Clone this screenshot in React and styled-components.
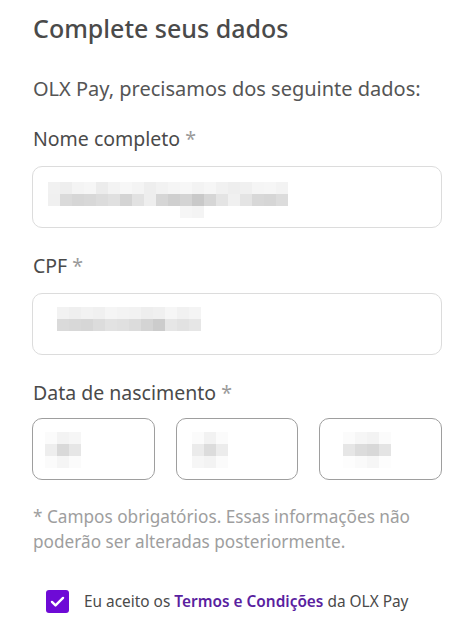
import styled, { createGlobalStyle } from "styled-components";

const GlobalStyle = createGlobalStyle`
  * { box-sizing: border-box; }
  body {
    margin: 0;
    background: #ffffff;
    font-family: "Noto Sans", "Open Sans", sans-serif;
    color: #4a4a4a;
  }
`;

// pixelated placeholders standing in for the blurred personal data
const NAME_ROWS = [
  "f1 ee f4 f6 ec f3 f7 f4 ee f2 f5 f7 f3 f6 f1 ee f0 f5 f6 f3",
  "f0 da d6 d8 dc e0 d4 e2 ee d6 cf d4 c9 d6 e4 f0 e4 d8 d6 dc",
  "ff ff ff ff ff ff ff ff ff ff ff f6 f4 ff ff ff ff ff ff ff",
];
const CPF_ROWS = [
  "f2 ef f2 f0 f5 f3 f2 ee f0 f6 f1 f4",
  "da d8 d6 dc e2 e0 dc d4 cc e6 e2 e6",
];
const DAY_ROWS = ["fb f3 f6", "ee d9 e6", "fb f5 fb"];
const MONTH_ROWS = ["fb f2 fb", "eb dc ec", "f6 f3 fb"];
const YEAR_ROWS = ["fb f6 f3 fb", "e6 dc d8 e4", "fd fa f6 fd"];

const Redacted = ({ rows }) => (
  <Mosaic>
    {rows.map((row, i) => (
      <MosaicRow key={i}>
        {row.split(" ").map((shade, j) => (
          <Cell key={j} style={{ background: `#${shade}${shade}${shade}` }} />
        ))}
      </MosaicRow>
    ))}
  </Mosaic>
);

const App = () => (
  <>
    <GlobalStyle />
    <Page>
      <Title>Complete seus dados</Title>
      <Intro>OLX Pay, precisamos dos seguinte dados:</Intro>

      <Field $first>
        <Label>
          Nome completo <Req>*</Req>
        </Label>
        <InputBox $inset={14.5} $top={15}>
          <Redacted rows={NAME_ROWS} />
        </InputBox>
      </Field>

      <Field>
        <Label>
          CPF <Req>*</Req>
        </Label>
        <InputBox $inset={23.5}>
          <Redacted rows={CPF_ROWS} />
        </InputBox>
      </Field>

      <Field>
        <Label>
          Data de nascimento <Req>*</Req>
        </Label>
        <DateRow>
          <DateBox $inset={11.5}>
            <Redacted rows={DAY_ROWS} />
          </DateBox>
          <DateBox $inset={15.5}>
            <Redacted rows={MONTH_ROWS} />
          </DateBox>
          <DateBox $inset={22.5}>
            <Redacted rows={YEAR_ROWS} />
          </DateBox>
        </DateRow>
      </Field>

      <Note>
        * Campos obrigatórios. Essas informações não poderão ser alteradas
        posteriormente.
      </Note>

      <Terms>
        <Check>
          <svg viewBox="0 0 24 24" width="19" height="19">
            <path
              d="M5 12.5l4.5 4.5L19 7.5"
              fill="none"
              stroke="#ffffff"
              strokeWidth="3"
              strokeLinecap="round"
              strokeLinejoin="round"
            />
          </svg>
        </Check>
        <TermsText>
          Eu aceito os <TermsLink>Termos e Condições</TermsLink> da OLX Pay
        </TermsText>
      </Terms>
    </Page>
  </>
);

const Page = styled.div`
  display: flex;
  flex-direction: column;
  padding: 12px 32px 0 32px;
  width: 474px;
  min-height: 632px;
`;

const Title = styled.h1`
  margin: 0 0 0 1px;
  font-size: 25px;
  font-weight: 500;
  line-height: 32px;
  color: #4a4a4a;
`;

const Intro = styled.p`
  margin: 32px 0 0 1px;
  font-size: 20px;
  line-height: 26px;
  color: #555555;
`;

const Field = styled.div`
  display: flex;
  flex-direction: column;
  margin-top: ${(p) => (p.$first ? 24 : 25.5)}px;
`;

const Label = styled.div`
  margin-left: 1px;
  font-size: 19.5px;
  line-height: 26px;
  color: #4a4a4a;
`;

const Req = styled.span`
  color: #9a9a9a;
`;

const InputBox = styled.div`
  display: flex;
  align-items: flex-start;
  height: 62px;
  margin-top: 13.5px;
  padding: ${(p) => p.$top || 13}px 0 0 ${(p) => p.$inset || 14}px;
  border: 1.5px solid #dcdcdc;
  border-radius: 10px;
  background: #ffffff;
`;

const DateRow = styled.div`
  display: grid;
  grid-template-columns: repeat(3, 1fr);
  gap: 21px;
  margin-top: 12px;
`;

const DateBox = styled(InputBox)`
  margin-top: 0;
  border-color: #9e9e9e;
`;

const Mosaic = styled.div`
  display: flex;
  flex-direction: column;
`;

const MosaicRow = styled.div`
  display: flex;
`;

const Cell = styled.div`
  width: 12px;
  height: 12px;
`;

const Note = styled.p`
  margin: 24px 0 0 1px;
  font-size: 17.2px;
  line-height: 25px;
  color: #9e9e9e;
`;

const Terms = styled.label`
  display: flex;
  align-items: center;
  gap: 15px;
  margin: 36px 0 0 14px;
`;

const Check = styled.span`
  display: flex;
  align-items: center;
  justify-content: center;
  width: 23px;
  height: 23px;
  border-radius: 3px;
  background: #6e0ad6;
`;

const TermsText = styled.span`
  font-size: 15.4px;
  line-height: 22px;
  color: #4a4a4a;
`;

const TermsLink = styled.span`
  color: #5a1fa0;
  font-weight: 600;
`;

export default App;
